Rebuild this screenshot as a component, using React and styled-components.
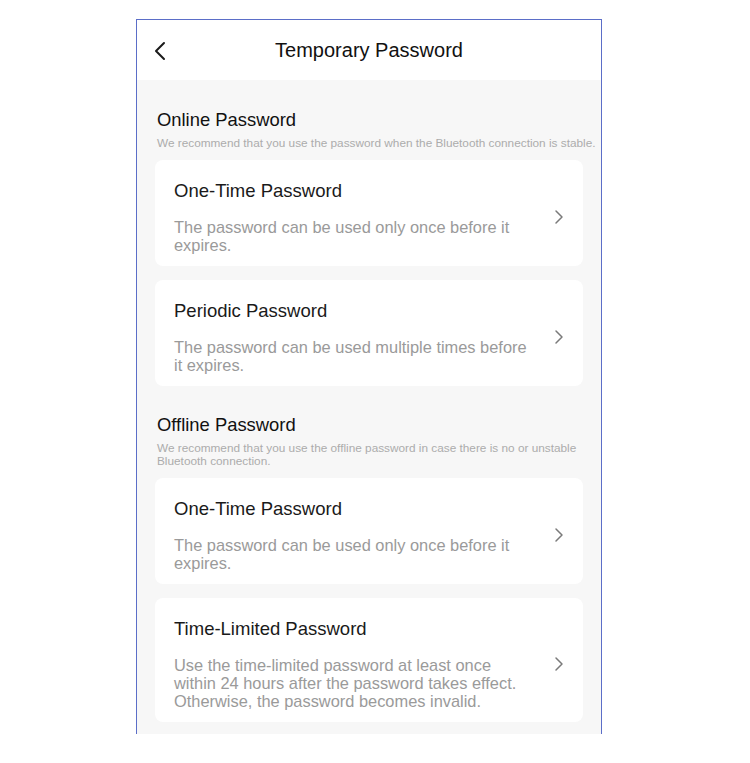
import React from 'react';
import styled, { createGlobalStyle } from 'styled-components';

const GlobalStyle = createGlobalStyle`
  body {
    margin: 0;
    background: #ffffff;
    font-family: 'Liberation Sans', Arial, sans-serif;
  }
`

const Page = styled.div`
  padding: 19px 0 0 136px;
`

const Frame = styled.div`
  width: 464px;
  height: 714px;
  border: 1px solid #5b6ec8;
  border-bottom: 0;
  background: #f7f7f7;
  overflow: hidden;
  display: flex;
  flex-direction: column;
`

const Header = styled.header`
  height: 60px;
  flex-shrink: 0;
  background: #ffffff;
  display: flex;
  align-items: center;
  justify-content: center;
  position: relative;
`

const BackButton = styled.button`
  position: absolute;
  left: 12px;
  top: 20px;
  width: 22px;
  height: 22px;
  padding: 0;
  border: 0;
  background: none;
  display: flex;
  align-items: center;
  justify-content: center;
`

const Title = styled.h1`
  margin: 0;
  font-size: 20px;
  font-weight: 400;
  color: #111111;
`

const Body = styled.main`
  padding: 29px 18px 0;
  display: flex;
  flex-direction: column;
`

const Section = styled.section`
  display: flex;
  flex-direction: column;
  margin-bottom: ${p => p.$last ? 0 : 28}px;
`

const SectionHead = styled.div`
  padding: 0 0 0 2px;
  margin-right: -14px;
  margin-bottom: 10px;
`

const SectionTitle = styled.h2`
  margin: 0 0 6px;
  font-size: 18.4px;
  line-height: 22px;
  font-weight: 400;
  color: #111111;
`

const SectionNote = styled.p`
  margin: 0;
  font-size: 11.8px;
  line-height: 13px;
  color: #acacac;
`

const CardList = styled.div`
  display: flex;
  flex-direction: column;
  gap: 14px;
`

const Card = styled.div`
  background: #ffffff;
  border-radius: 8px;
  padding: 20px 19px 12px 19px;
  display: flex;
  align-items: center;
  gap: 12px;
`

const CardText = styled.div`
  flex: 1;
  max-width: 358px;
`

const CardTitle = styled.div`
  font-size: 18.5px;
  line-height: 22px;
  color: #1a1a1a;
  margin-bottom: 16px;
`

const CardDesc = styled.div`
  font-size: 16.4px;
  line-height: 18px;
  color: #9a9a9a;
`

const Chevron = styled.span`
  margin-left: auto;
  display: flex;
`

const ChevronRight = () => (
  <svg width="10" height="16" viewBox="0 0 10 16">
    <path d="M2 2 L8 8 L2 14" fill="none" stroke="#7a7a7a" strokeWidth="1.5" strokeLinecap="round" strokeLinejoin="round" />
  </svg>
)

const sections = [
  {
    title: 'Online Password',
    note: 'We recommend that you use the password when the Bluetooth connection is stable.',
    items: [
      { title: 'One-Time Password', desc: 'The password can be used only once before it expires.' },
      { title: 'Periodic Password', desc: 'The password can be used multiple times before it expires.' },
    ],
  },
  {
    title: 'Offline Password',
    note: 'We recommend that you use the offline password in case there is no or unstable Bluetooth connection.',
    items: [
      { title: 'One-Time Password', desc: 'The password can be used only once before it expires.' },
      { title: 'Time-Limited Password', desc: 'Use the time-limited password at least once within 24 hours after the password takes effect. Otherwise, the password becomes invalid.' },
    ],
  },
]

const App = () => {
  return (
    <>
      <GlobalStyle />
      <Page>
        <Frame>
          <Header>
            <BackButton type="button" aria-label="Back">
              <svg width="14" height="20" viewBox="0 0 14 20">
                <path d="M11 2 L3 10 L11 18" fill="none" stroke="#1a1a1a" strokeWidth="2" strokeLinecap="round" strokeLinejoin="round" />
              </svg>
            </BackButton>
            <Title>Temporary Password</Title>
          </Header>
          <Body>
            {sections.map((s, i) => (
              <Section key={s.title} $last={i === sections.length - 1}>
                <SectionHead>
                  <SectionTitle>{s.title}</SectionTitle>
                  <SectionNote>{s.note}</SectionNote>
                </SectionHead>
                <CardList>
                  {s.items.map(item => (
                    <Card key={item.title}>
                      <CardText>
                        <CardTitle>{item.title}</CardTitle>
                        <CardDesc>{item.desc}</CardDesc>
                      </CardText>
                      <Chevron><ChevronRight /></Chevron>
                    </Card>
                  ))}
                </CardList>
              </Section>
            ))}
          </Body>
        </Frame>
      </Page>
    </>
  );
}

export default App;
